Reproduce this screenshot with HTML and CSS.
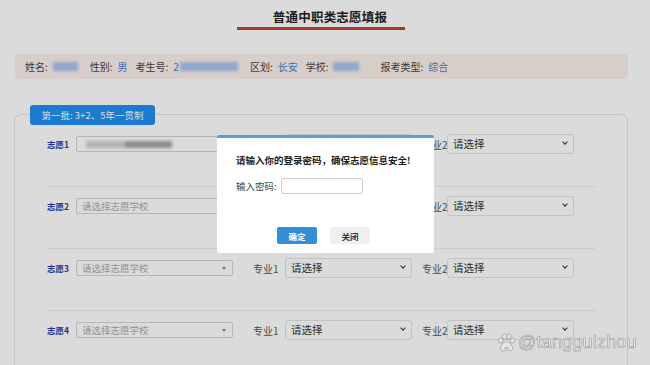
FILE: index.html
```html
<!DOCTYPE html>
<html>
    <head>
        <meta charset="utf-8">
        <title>普通中职类志愿填报</title>
        <link rel="stylesheet" href="styles.css">
    </head>
    <body>
        <div class="page">
            <div class="head">
                <h1>普通中职类志愿填报</h1>
                <div class="head-line"></div>
            </div>

            <div class="info">
                <span class="k">姓名:</span><span class="blur w25"></span>
                <span class="k">性别:</span><span class="v">男</span>
                <span class="k">考生号:</span><span class="v id">2</span><span class="blur w58"></span>
                <span class="k">区划:</span><span class="v">长安</span>
                <span class="k">学校:</span><span class="blur w26"></span>
                <span class="k">报考类型:</span><span class="v">综合</span>
            </div>

            <div class="panel">
                <div class="tab">第一批: 3+2、5年一贯制</div>

                <div class="row">
                    <span class="zy">志愿1</span>
                    <div class="school filled"><span class="smear a"></span><span class="smear b"></span><i class="tri"></i></div>
                    <span class="lb">专业1</span>
                    <div class="major">请选择<i class="chev"></i></div>
                    <span class="lb lb2">专业2</span>
                    <div class="major">请选择<i class="chev"></i></div>
                </div>
                <div class="row">
                    <span class="zy">志愿2</span>
                    <div class="school">请选择志愿学校<i class="tri"></i></div>
                    <span class="lb">专业1</span>
                    <div class="major">请选择<i class="chev"></i></div>
                    <span class="lb lb2">专业2</span>
                    <div class="major">请选择<i class="chev"></i></div>
                </div>
                <div class="row">
                    <span class="zy">志愿3</span>
                    <div class="school">请选择志愿学校<i class="tri"></i></div>
                    <span class="lb">专业1</span>
                    <div class="major">请选择<i class="chev"></i></div>
                    <span class="lb lb2">专业2</span>
                    <div class="major">请选择<i class="chev"></i></div>
                </div>
                <div class="row">
                    <span class="zy">志愿4</span>
                    <div class="school">请选择志愿学校<i class="tri"></i></div>
                    <span class="lb">专业1</span>
                    <div class="major">请选择<i class="chev"></i></div>
                    <span class="lb lb2">专业2</span>
                    <div class="major">请选择<i class="chev"></i></div>
                </div>
            </div>
        </div>

        <div class="mask"></div>

        <div class="dialog">
            <p class="dialog-title">请输入你的登录密码，确保志愿信息安全!</p>
            <div class="pwd">
                <label for="pwd">输入密码:</label>
                <input id="pwd" type="password">
            </div>
            <div class="btns">
                <button class="ok">确定</button>
                <button class="close">关闭</button>
            </div>
        </div>

        <div class="mark">
            <svg width="19" height="19" viewBox="0 0 20 20">
                <g fill="#e6e6e6" stroke="#9a9a9a" stroke-width="0.8">
                    <ellipse cx="4" cy="8" rx="2.3" ry="2.8"/>
                    <ellipse cx="8" cy="3.8" rx="2.3" ry="2.8"/>
                    <ellipse cx="12.5" cy="3.8" rx="2.3" ry="2.8"/>
                    <ellipse cx="16.3" cy="8" rx="2.3" ry="2.8"/>
                    <path d="M10 9c-3 0-6.5 4.5-6.5 7 0 2 1.8 3 3.5 2.5 1.2-.3 2-.6 3-.6s1.8.3 3 .6c1.7.5 3.5-.5 3.5-2.5 0-2.5-3.5-7-6.5-7z"/>
                </g>
                <text x="10" y="17" font-size="4.5" text-anchor="middle" fill="#888" font-family="Liberation Sans, sans-serif">du</text>
            </svg>
            <span>@tangguizhou</span>
        </div>
    </body>
</html>
```

FILE: styles.css
```css
body {
    margin: 0;
    background: #fff;
    font-family: "Noto Sans CJK SC", "Noto Sans", sans-serif;
    color: #333;
    width: 650px;
    height: 365px;
    overflow: hidden;
}

.page {
    width: 614px;
    margin-left: 14px;
}

.head {
    display: flex;
    flex-direction: column;
    align-items: center;
    padding-top: 8px;
}

.head h1 {
    margin: 0 0 0 18px;
    font-size: 12.5px;
    line-height: 18px;
    font-weight: bold;
    color: #222;
    letter-spacing: 0.2px;
}

.head-line {
    width: 168px;
    height: 3px;
    background: #c4402e;
    margin-top: 1px;
}

.info {
    margin-top: 24px;
    margin-left: 1px;
    height: 25px;
    background: #fbf0ec;
    border-radius: 4px;
    display: flex;
    align-items: center;
    padding-left: 10px;
    font-size: 10px;
    color: #444;
}

.info .k {
    margin-right: 5px;
}

.info .v {
    color: #3f7fd6;
    margin-right: 8px;
}

.info .v.id {
    margin-right: 1px;
}

.info .blur {
    display: inline-block;
    height: 9px;
    background: #a8c4f0;
    filter: blur(1.6px);
    margin-right: 12px;
}

.w25 { width: 25px; }
.w58 { width: 58px; }
.w26 { width: 26px; margin-right: 21px !important; }

.panel {
    margin-top: 35px;
    border: 1px solid #e6e6e6;
    border-bottom: none;
    border-radius: 7px 7px 0 0;
    height: 260px;
}

.tab {
    width: 125px;
    height: 20px;
    line-height: 20px;
    margin: -10px 0 0 15px;
    background: #2090f4;
    color: #fff;
    font-size: 9.5px;
    text-align: center;
    border-radius: 3px;
}

.row {
    display: flex;
    align-items: center;
    margin-left: 32px;
    width: 548px;
    height: 20px;
    padding: 9px 0 32px;
    border-bottom: 1px solid #ececec;
}

.row:last-child {
    border-bottom: none;
}

.zy {
    width: 29px;
    font-size: 8.5px;
    font-weight: bold;
    color: #2d3ba8;
}

.school {
    position: relative;
    width: 157px;
    height: 16px;
    box-sizing: border-box;
    border: 1px solid #d4d4d4;
    border-radius: 2px;
    background: #fff;
    font-size: 9.5px;
    line-height: 14px;
    color: #aaa;
    padding-left: 5px;
}

.school.filled {
    display: flex;
    align-items: center;
}

.smear {
    display: inline-block;
    height: 7px;
    filter: blur(1.5px);
}

.smear.a {
    width: 38px;
    background: #d2d2d2;
    margin-left: 4px;
}

.smear.b {
    width: 48px;
    background: #a8a8a8;
}

.tri {
    position: absolute;
    right: 6px;
    top: 6px;
    border-left: 2px solid transparent;
    border-right: 2px solid transparent;
    border-top: 3px solid #888;
}

.lb {
    flex: none;
    margin-left: 20px;
    width: 32px;
    font-size: 10px;
    color: #555;
    white-space: nowrap;
}

.lb.lb2 {
    margin-left: 10px;
    width: 25px;
}

.major {
    position: relative;
    flex: none;
    width: 127px;
    height: 20px;
    box-sizing: border-box;
    border: 1px solid #e2e2e2;
    border-radius: 3px;
    background: #fff;
    font-size: 10.5px;
    line-height: 18px;
    color: #333;
    padding-left: 5px;
}

.chev {
    position: absolute;
    right: 6px;
    top: 5px;
    width: 3px;
    height: 3px;
    border-right: 1.5px solid #333;
    border-bottom: 1.5px solid #333;
    transform: rotate(45deg);
}

.mask {
    position: fixed;
    left: 0;
    top: 0;
    width: 100%;
    height: 100%;
    background: rgba(0, 0, 0, 0.14);
}

.dialog {
    position: fixed;
    left: 217px;
    top: 135px;
    width: 217px;
    height: 118px;
    box-sizing: border-box;
    background: #fff;
    border-top: 3px solid #5a9fd8;
    border-radius: 2px;
    padding: 15px 0 0 19px;
}

.dialog-title {
    margin: 0;
    font-size: 9.5px;
    font-weight: bold;
    color: #222;
    line-height: 14px;
}

.pwd {
    display: flex;
    align-items: center;
    margin-top: 11px;
    font-size: 9.5px;
    color: #444;
}

.pwd input {
    margin-left: 4px;
    width: 82px;
    height: 16px;
    box-sizing: border-box;
    border: 1px solid #ccc;
    border-radius: 2px;
    outline: none;
}

.btns {
    display: flex;
    gap: 13px;
    margin: 33px 0 0 41px;
}

.btns button {
    width: 40px;
    height: 17px;
    padding: 0;
    border: none;
    border-radius: 2px;
    font-family: inherit;
    font-size: 8.5px;
    font-weight: bold;
}

.ok {
    background: #2f8fd8;
    color: #fff;
}

.close {
    background: #efefef;
    color: #333;
}

.mark {
    position: fixed;
    left: 497px;
    top: 332px;
    display: flex;
    align-items: center;
    gap: 2px;
}

.mark span {
    font-family: "Liberation Sans", sans-serif;
    font-size: 18px;
    color: #eaeaea;
    -webkit-text-stroke: 0.6px #9a9a9a;
    letter-spacing: 0.2px;
}
```
